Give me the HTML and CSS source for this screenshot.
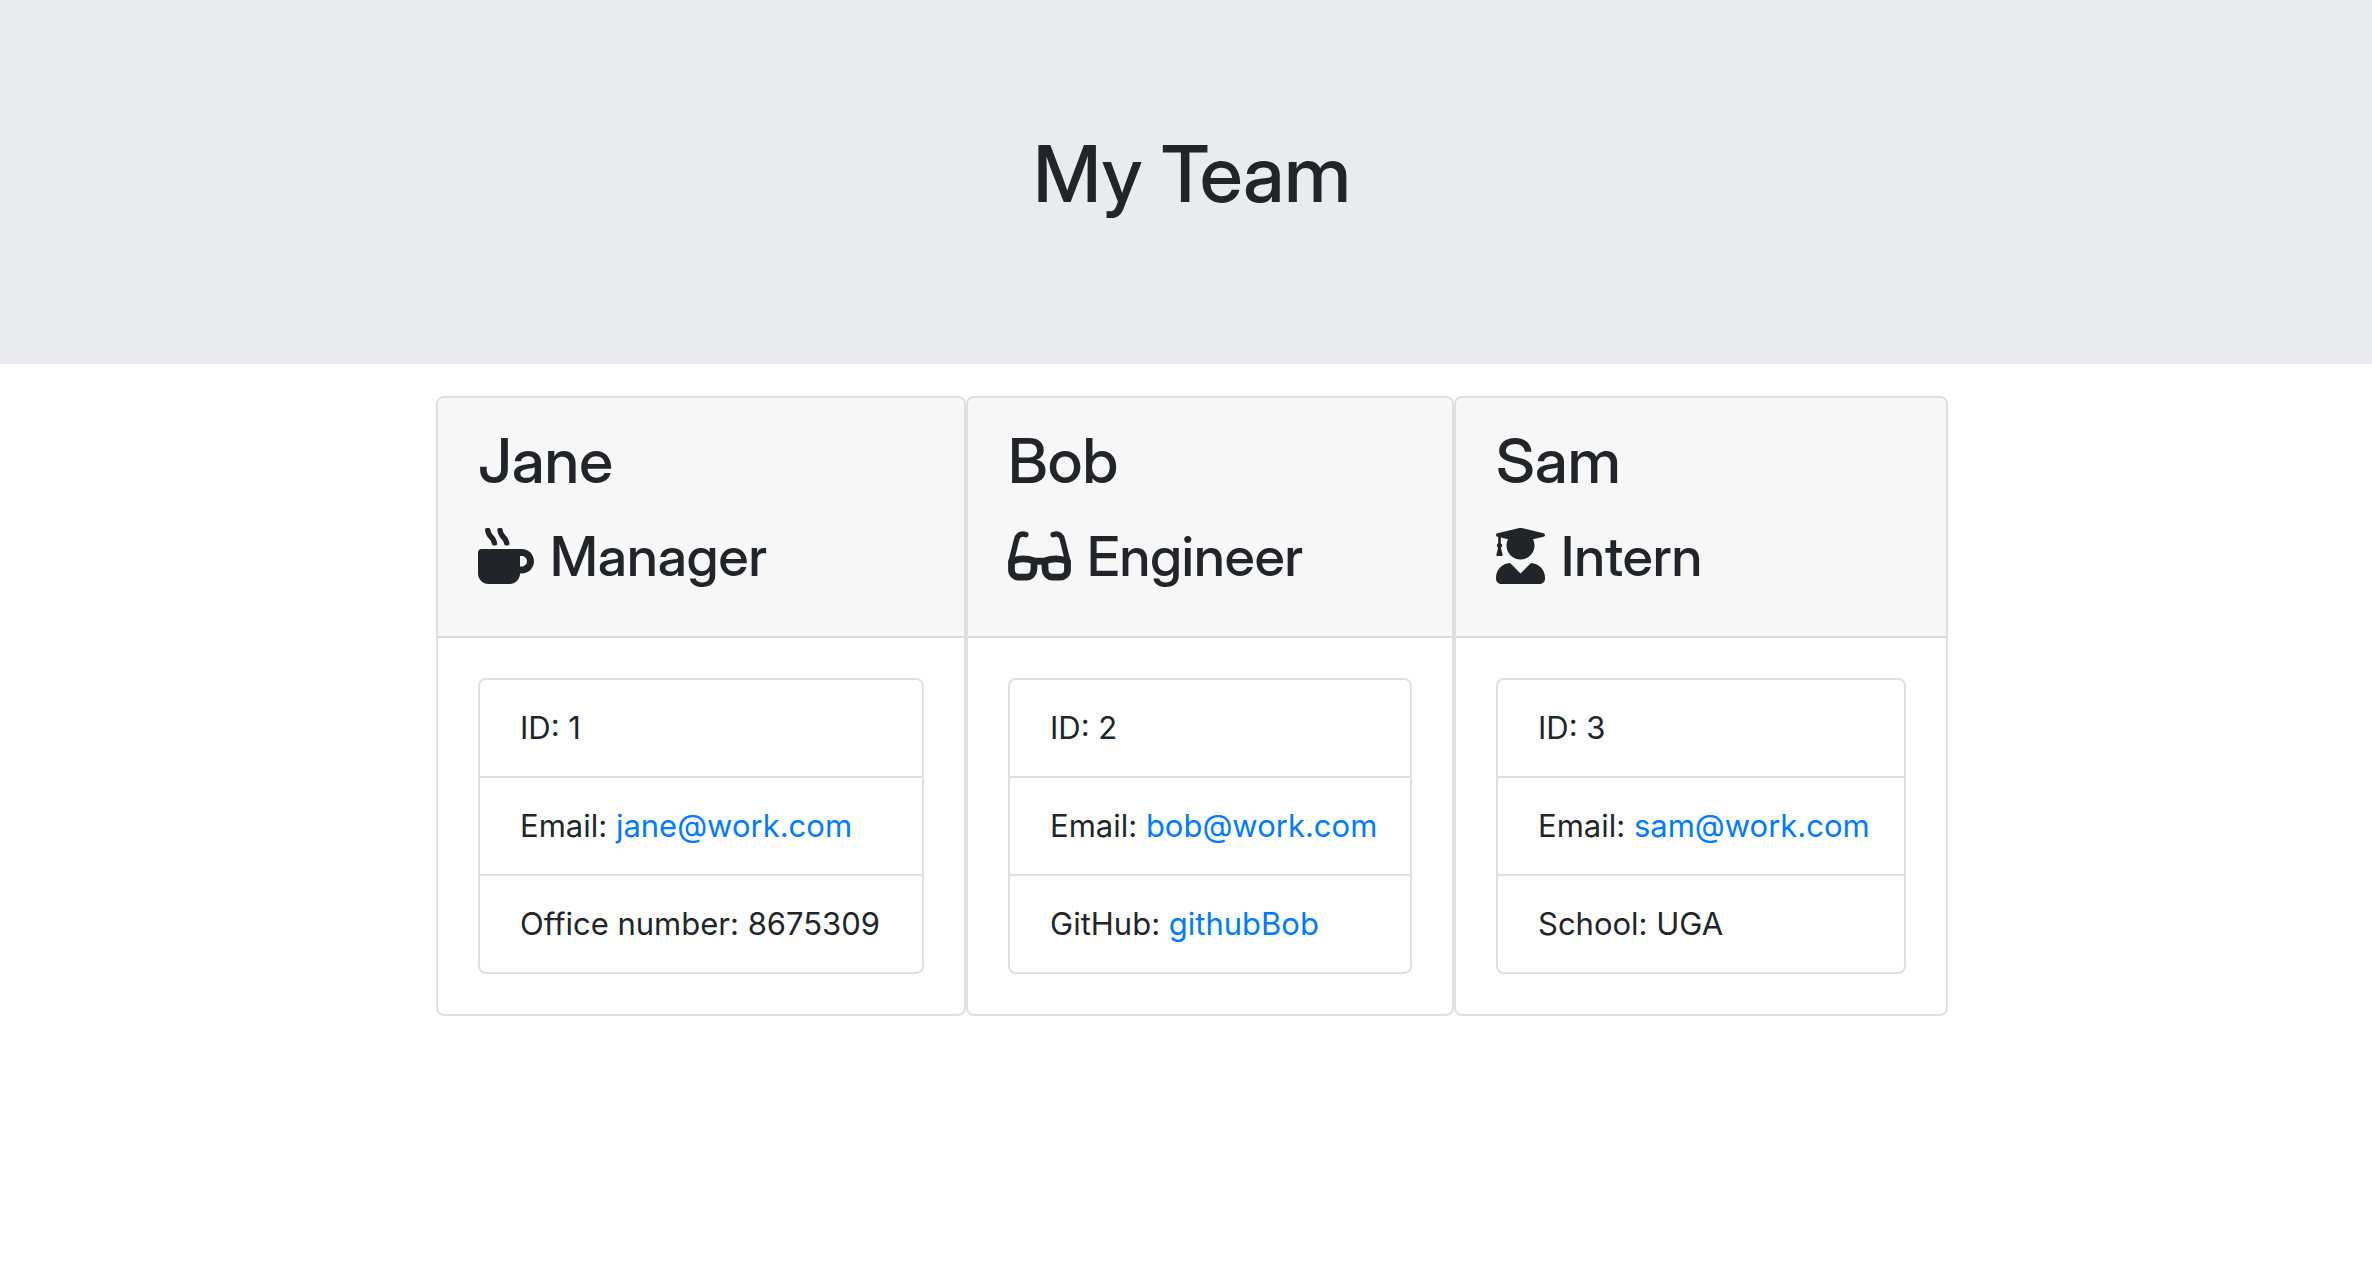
FILE: index.html
```html
<!DOCTYPE html>
<html lang="en">
<head>
  <meta charset="utf-8">
  <meta name="viewport" content="width=device-width, initial-scale=1">
  <title>My Team</title>
  <link rel="stylesheet" href="styles.css">
</head>
<body>
  <header class="banner">
    <h1 class="banner-title">My Team</h1>
  </header>
  <main class="team">
    <article class="card">
      <div class="card-header">
        <h2 class="name">Jane</h2>
        <h3 class="role">
          <svg class="icon" viewBox="0 0 512 512" aria-hidden="true"><path d="M127.1 146.5c1.3 7.7 8 13.5 16 13.5h16.5c9.8 0 17.6-8.5 16.3-18-3.8-28.2-16.4-54.2-36.6-74.7-14.4-14.7-23.6-33.3-26.4-53.5C111.8 5.9 105 0 96.8 0H80.4C70.6 0 63 8.5 64.1 18c3.9 31.9 18 61.3 40.6 84.4 12 12.2 19.7 27.5 22.4 44.1zm112 0c1.3 7.7 8 13.5 16 13.5h16.5c9.8 0 17.6-8.5 16.3-18-3.8-28.2-16.4-54.2-36.6-74.7-14.4-14.7-23.6-33.3-26.4-53.5C223.8 5.9 217 0 208.8 0h-16.4c-9.8 0-17.5 8.5-16.3 18 3.9 31.9 18 61.3 40.6 84.4 12 12.2 19.7 27.5 22.4 44.1zM400 192H32c-17.7 0-32 14.3-32 32v192c0 53 43 96 96 96h192c53 0 96-43 96-96h16c61.8 0 112-50.2 112-112s-50.2-112-112-112zm0 160h-16v-96h16c26.5 0 48 21.5 48 48s-21.5 48-48 48z"/></svg>
          Manager
        </h3>
      </div>
      <div class="card-body">
        <ul class="details">
          <li class="detail">ID: 1</li>
          <li class="detail">Email: <a class="link" href="mailto:jane@work.com">jane@work.com</a></li>
          <li class="detail">Office number: 8675309</li>
        </ul>
      </div>
    </article>
    <article class="card">
      <div class="card-header">
        <h2 class="name">Bob</h2>
        <h3 class="role">
          <svg class="icon icon-line" viewBox="0 0 576 512" aria-hidden="true">
            <path class="temples" d="M28 310L78 108C87 70 112 50 145 56L163 61M548 310L498 108C489 70 464 50 431 56L413 61"/>
            <path d="M32 306C95 278 175 278 240 302L236 385C234 422 206 449 170 449H100C60 449 32 421 32 385ZM544 306C481 278 401 278 336 302L340 385C342 422 370 449 406 449H476C516 449 544 421 544 385ZM240 304H336"/>
          </svg>
          Engineer
        </h3>
      </div>
      <div class="card-body">
        <ul class="details">
          <li class="detail">ID: 2</li>
          <li class="detail">Email: <a class="link" href="mailto:bob@work.com">bob@work.com</a></li>
          <li class="detail">GitHub: <a class="link" href="https://github.com/githubBob">githubBob</a></li>
        </ul>
      </div>
    </article>
    <article class="card">
      <div class="card-header">
        <h2 class="name">Sam</h2>
        <h3 class="role">
          <svg class="icon" viewBox="0 0 448 512" aria-hidden="true"><path d="M319.4 320.6L224 416l-95.4-95.4C57.1 323.7 0 382.2 0 454.4v9.6c0 26.5 21.5 48 48 48h352c26.5 0 48-21.5 48-48v-9.6c0-72.2-57.1-130.7-128.6-133.8zM13.6 79.8l6.4 1.5v58.4c-7 4.2-12 11.5-12 20.3 0 8.4 4.6 15.4 11.1 19.7L3.5 242c-1.7 6.9 2.1 14 7.6 14h41.8c5.5 0 9.3-7.1 7.6-14l-15.6-62.3C51.4 175.4 56 168.4 56 160c0-8.8-5-16.1-12-20.3V87.1l66 15.9c-8.6 17.2-14 36.4-14 57 0 70.7 57.3 128 128 128s128-57.3 128-128c0-20.6-5.3-39.8-14-57l96.3-23.2c18.2-4.4 18.2-27.1 0-31.5l-190.4-46c-13-3.1-26.7-3.1-39.7 0L13.6 48.2c-18.1 4.4-18.1 27.2 0 31.6z"/></svg>
          Intern
        </h3>
      </div>
      <div class="card-body">
        <ul class="details">
          <li class="detail">ID: 3</li>
          <li class="detail">Email: <a class="link" href="mailto:sam@work.com">sam@work.com</a></li>
          <li class="detail">School: UGA</li>
        </ul>
      </div>
    </article>
  </main>
</body>
</html>
```
FILE: styles.css
```css
*,
*::before,
*::after {
  box-sizing: border-box;
}

body {
  margin: 0;
  background: #fff;
  color: #212529;
  font-family: Inter, "Liberation Sans", sans-serif;
  font-size: 31px;
  line-height: 48px;
}

h1,
h2,
h3,
ul {
  margin: 0;
  padding: 0;
}

h1,
h2,
h3 {
  font-family: "Inter Display", Inter, "Liberation Sans", sans-serif;
  font-variation-settings: "opsz" 32;
  font-weight: 520;
}

.banner {
  margin-bottom: 32px;
  padding: 126px 0 142px 12px;
  background: #eaebef;
  text-align: center;
}

.banner-title {
  font-size: 78px;
  line-height: 96px;
}

.team {
  display: grid;
  grid-template-columns: 265fr 244fr 247fr;
  max-width: 1524px;
  margin: 0 auto;
  padding-left: 12px;
}

.card {
  border: 2px solid #dfdfdf;
  border-radius: 8px;
  overflow: hidden;
}

.card-header {
  padding: 24px 40px;
  border-bottom: 2px solid #d8d8d8;
  background: #f7f7f7;
}

.name {
  margin-bottom: 16px;
  font-size: 62px;
  line-height: 78px;
}

.role {
  display: flex;
  align-items: center;
  gap: 16px;
  margin-bottom: 16px;
  font-size: 55px;
  line-height: 80px;
}

.icon {
  height: 56px;
  fill: currentColor;
}

.icon-line {
  fill: none;
  stroke: currentColor;
  stroke-width: 62;
  stroke-linecap: round;
  stroke-linejoin: round;
}

.temples {
  stroke-width: 50;
}

.card-body {
  padding: 40px;
}

.details {
  border: 2px solid #dfdfdf;
  border-radius: 8px;
  list-style: none;
}

.detail {
  padding: 24px 30px 24px 40px;
}

.detail + .detail {
  border-top: 2px solid #dfdfdf;
}

.link {
  color: #007bff;
  text-decoration: none;
}
```
